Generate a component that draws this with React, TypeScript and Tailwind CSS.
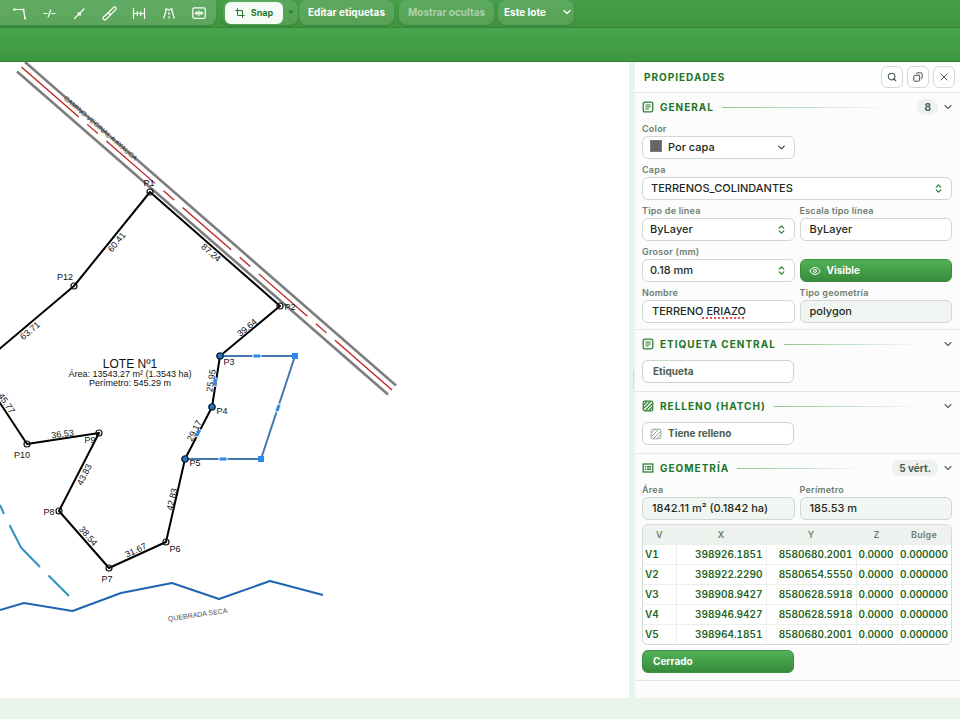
import React from "react";
import { ChevronDown, ChevronsUpDown, Copy, Crop, Eye, Search, X } from "lucide-react";

const toolIcons: { name: string; art: React.ReactNode }[] = [
  { name: "Polilínea", art: <><path d="M3 4.500h9.500l1.500 9" /><path d="M3 4.500h1M12.500 4.500l.100.500M13.900 13l.100.500" strokeWidth="2" /></> },
  { name: "Cortar línea", art: <path d="M3 8.500h3M11 8.500h3M7.200 12l2.600-7" /> },
  { name: "Punto medio", art: <><path d="M3.500 13.500L13 4" /><path d="M7.500 8.200l1.600 1.400" strokeWidth="2.200" /></> },
  { name: "Pincel", art: <><path d="M6.500 8.500l6-6a1.500 1.500 0 0 1 2.200 2.100L8.700 10.700" /><path d="M6.500 8.500a1.500 1.500 0 0 1 2.200 2.200l-3.200 3.200a1.900 1.900 0 0 1-3.600-.800l.600-1.100z" /></> },
  { name: "Cota", art: <path d="M2.500 3.500v10M13.500 3.500v10M3 8.500h10M6.300 6.500v4M9.700 6.500v4" /> },
  { name: "Camino", art: <path d="M5.500 4.200L2.800 13M10.500 4.200l2.700 8.800M4.500 4.200h2M9.500 4.200h2M8 4.200v1.300M8 7.500v2M8 11.500V13" /> },
  { name: "Ajustar", art: <><rect x="1.800" y="2.800" width="12.500" height="10.500" rx="1.500" /><path d="M4 8.200h2.500M9.500 8.200H12M5.500 6.800l1.300 1.400-1.300 1.400M10.500 6.800L9.200 8.200l1.300 1.400M8 5.800v4.800" /></> },
];

function NoteIcon() {
  return (
    <svg viewBox="0 0 12 12" className="size-3 shrink-0 fill-none stroke-[#2c7f32]" strokeWidth="1.300" strokeLinecap="round" strokeLinejoin="round">
      <path d="M3 1.200h6a1.800 1.800 0 0 1 1.800 1.800v6a1.800 1.800 0 0 1-1.800 1.800H1.800L1.200 9V3A1.800 1.800 0 0 1 3 1.200z" />
      <path d="M3.800 4h4.500M3.800 6h4.500M3.800 8h2.700" strokeWidth="1" />
    </svg>
  );
}

function HatchIcon({ muted = false }: { muted?: boolean }) {
  return (
    <svg viewBox="0 0 12 12" className={muted ? "size-3 shrink-0 fill-none stroke-[#7f9082]" : "size-3 shrink-0 fill-none stroke-[#2c7f32]"} strokeWidth={muted ? 0.8 : 1.2}>
      <rect x="1.200" y="1.200" width="9.600" height="9.600" rx="1.500" />
      <path d="M1.500 5l3.500-3.500M1.500 8.500l7-7M3.500 10.500l7-7M7 10.500L10.500 7" />
    </svg>
  );
}

function SheetIcon() {
  return (
    <svg viewBox="0 0 12 12" className="size-3 shrink-0 fill-none stroke-[#2c7f32]" strokeWidth="1.300">
      <rect x="1.200" y="2" width="9.600" height="8" />
      <path d="M2.800 4.500H4M4.800 4.500h4.400M2.800 6H4M4.800 6h4.400M2.800 7.500H4M4.800 7.500h4.400" strokeWidth="1" />
    </svg>
  );
}

function Section({ icon, title, badge, children }: { icon: React.ReactNode; title: string; badge?: string; children: React.ReactNode }) {
  return (
    <section className="border-b border-[#e3e8e4]">
      <button type="button" className="flex h-7 w-full items-center pr-1.5 pl-[7px] text-left">
        {icon}
        <h3 className="ml-1.5 text-[10px] font-bold tracking-widest text-[#217528]">{title}</h3>
        <span className="mx-2 h-px flex-1 bg-linear-to-r from-[#8fc493] to-transparent" />
        {badge && <span className="mr-1 ml-4 rounded-full bg-[#edf2ee] px-[7px] text-[10px] leading-4 font-bold text-[#4b5f50]">{badge}</span>}
        <ChevronDown className={badge ? "size-3 text-[#56665a]" : "ml-3 size-3 text-[#56665a]"} strokeWidth={2.2} />
      </button>
      <div className="pr-2 pl-[7px]">{children}</div>
    </section>
  );
}

const control = "block h-[23px] w-full rounded-md border border-[#cfd8d1] text-[11px] font-medium text-[#1c2a20] outline-none";
const textBox = `${control} px-[9px] pb-0.5`;

function Field({ id, label, wide = false, children }: { id: string; label: string; wide?: boolean; children: React.ReactNode }) {
  return (
    <div className={wide ? "col-span-2" : ""}>
      <label htmlFor={id} className="block h-[15px] text-[9px] leading-[15px] font-semibold tracking-wide text-[#6d7d71]">{label}</label>
      <div className="relative">{children}</div>
    </div>
  );
}

function SelectField({ id, label, value, wide = false }: { id: string; label: string; value: string; wide?: boolean }) {
  return (
    <Field id={id} label={label} wide={wide}>
      <select id={id} className={`${control} appearance-none bg-white ${wide ? "px-2" : "px-[7px]"}`}>
        <option>{value}</option>
      </select>
      <ChevronsUpDown className="pointer-events-none absolute top-1.5 right-2 size-[11px] text-[#2c8033]" strokeWidth={2.8} />
    </Field>
  );
}

const vertices = [
  ["V1", "398926.1851", "8580680.2001", "0.0000", "0.000000"],
  ["V2", "398922.2290", "8580654.5550", "0.0000", "0.000000"],
  ["V3", "398908.9427", "8580628.5918", "0.0000", "0.000000"],
  ["V4", "398946.9427", "8580628.5918", "0.0000", "0.000000"],
  ["V5", "398964.1851", "8580680.2001", "0.0000", "0.000000"],
];

const corners = [[150, 192], [280, 306], [220, 356], [212, 407], [185, 459], [166, 542], [109, 568], [59, 511], [99, 433], [27, 444], [74, 286]];

const lengths: [string, number, number, number][] = [
  ["60.41", 119, 244, -51],
  ["87.24", 209, 255, 41],
  ["39.64", 249, 330, -39],
  ["25.95", 214, 381, -81],
  ["29.17", 197, 432, -63],
  ["42.83", 175, 500, -77],
  ["31.67", 137, 553, -25],
  ["38.54", 86, 538, 49],
  ["43.83", 87, 476, -63],
  ["36.53", 63, 437, -8],
  ["45.77", 4, 405, 56],
  ["63.71", 32, 333, -40],
];

const cornerNames: [string, number, number][] = [
  ["P1", 149, 186], ["P2", 290, 310], ["P3", 229, 365], ["P4", 222, 414], ["P5", 195, 466], ["P6", 175, 552],
  ["P7", 107, 582], ["P8", 49, 515], ["P9", 90, 443], ["P10", 22, 458], ["P12", 65, 280],
];

const grips: [number, number, number][] = [[257, 356, 0], [278, 408, -71], [223, 459, 0], [198, 433, -63], [215, 382, -82]];

function Plan() {
  return (
    <svg className="absolute inset-0 size-full" role="img" aria-label="Plano del lote" fontFamily="'Liberation Sans', Arial, sans-serif" fontSize="9" textAnchor="middle" fill="#111">
      <g transform="translate(0 -62)">
        <g fill="none" stroke="#7d7d7d" strokeWidth="2.600">
          <path d="M25 62L396 385.500" />
          <path d="M17 71.500L388 394.500" />
          <path d="M21.500 67L392 390" stroke="#bd2020" strokeWidth="1.300" strokeDasharray="76 11.300 14 11.300 64.500 11.300 14 11.300 64.500 11.300 14 11.300 64.500 11.300 14 11.300 90 0" />
        </g>
        <text transform="translate(99 130) rotate(41)" fontSize="7" fill="#333">CAMINO VECINAL A AYAUCA</text>
        <g fill="none" strokeWidth="2" strokeLinejoin="round">
          <path d="M0 610L24 603L72.500 611L121 593L172 583L219 599L270 581L323 595" stroke="#1f65b2" />
          <path d="M0 505L4 514M9.500 525L21 547.500L40 567M48.500 575.500L69 596" stroke="#2f92c1" />
          <path d="M220 356H295L261 459H185" stroke="#4477ad" />
          <path d="M150 192L280 306L220 356L212 407L185 459L166 542L109 568L59 511L99 433L27 444L-23 368L74 286Z" stroke="#000" />
        </g>
        <text x="198" y="617" fontSize="7" fill="#555" transform="rotate(-8 198 617)">QUEBRADA SECA</text>
        <g fill="none" stroke="#111" strokeWidth="1.200">
          {corners.map(([x, y]) => <circle key={`${x}-${y}`} cx={x} cy={y} r="3" />)}
        </g>
        {[[220, 356], [212, 407], [185, 459]].map(([x, y]) => (
          <g key={x}>
            <rect x={x - 3} y={y - 3} width="6" height="6" fill="#2b75bd" />
            <circle cx={x} cy={y} r="3" fill="none" stroke="#0a2747" strokeWidth="1.200" />
          </g>
        ))}
        <rect x="292" y="353" width="6" height="6" fill="#298aeb" />
        <rect x="258" y="456" width="6" height="6" fill="#298aeb" />
        {grips.map(([x, y, angle]) => (
          <g key={`${x}-${y}`} transform={`translate(${x} ${y}) rotate(${angle})`}>
            <rect x="-4.500" y="-1.500" width="9" height="3" fill="#fff" />
            <rect x="-3.500" y="-1.500" width="7" height="3" fill="#298aeb" />
          </g>
        ))}
        {lengths.map(([label, x, y, angle]) => (
          <text key={label} transform={`translate(${x} ${y}) rotate(${angle})`}>{label}</text>
        ))}
        {cornerNames.map(([label, x, y]) => <text key={label} x={x} y={y}>{label}</text>)}
        <text x="130" y="368" fontSize="12">LOTE Nº1</text>
        <text x="130" y="377">Área: 13543.27 m² (1.3543 ha)</text>
        <text x="130" y="386">Perímetro: 545.29 m</text>
      </g>
    </svg>
  );
}

const greenButton = "h-[23px] rounded-md border border-[#3b8f40] bg-linear-to-b from-[#52b257] to-[#378b3c] text-left text-[10px] font-bold text-white";
const panelButton = "flex size-[22px] items-center justify-center rounded-md border border-[#d3dad5] bg-white text-[#46564a]";
const outlineButton = "flex h-[23px] w-[152px] items-center rounded-md border border-[#cbd4cd] bg-white text-[10px] font-bold text-[#4a5f52]";
const barButton = "block h-[25px] rounded-lg bg-white/12 text-[10px] font-bold shadow-sm";

export default function App() {
  return (
    <div className="flex min-h-screen flex-col bg-[#e8f3e9] font-['Inter',sans-serif]">
      <header className="text-white">
        <div className="flex h-7 items-start border-b border-[#36843a] bg-linear-to-b from-[#469f4a] to-[#40943f]">
          <div className="flex h-[25px] rounded-br-lg bg-white/15 pr-0.5 pl-1 shadow-sm">
            {toolIcons.map(({ name, art }) => (
              <button key={name} type="button" aria-label={name} className="flex w-[30px] items-center justify-center">
                <svg viewBox="0 0 16 16" className="size-4 fill-none stroke-current" strokeWidth="1.200" strokeLinecap="round" strokeLinejoin="round">{art}</svg>
              </button>
            ))}
          </div>
          <div className="ml-[7px] flex h-[25px] items-center rounded-lg bg-white/10 pl-0.5 shadow-sm">
            <button type="button" className="flex h-[22px] w-[58px] items-center justify-center gap-1.5 rounded-md bg-[#f5fcf5] text-[9px] font-bold text-[#27772d]">
              <Crop className="size-[10px]" strokeWidth={2.6} />
              Snap
            </button>
            <button type="button" aria-label="Opciones de snap" className="flex w-[15px] justify-center">
              <svg viewBox="0 0 8 5" className="h-[5px] w-2 fill-[#2f8035]"><path d="M1 .5h6L4 4z" /></svg>
            </button>
          </div>
          <button type="button" className={`${barButton} ml-px w-[95px]`}>Editar etiquetas</button>
          <button type="button" className={`${barButton} ml-[5px] w-[95px] text-white/50`}>Mostrar ocultas</button>
          <div className="relative ml-1">
            <select aria-label="Ámbito" className={`${barButton} w-[76px] appearance-none pl-1.5 outline-none`}>
              <option>Este lote</option>
            </select>
            <ChevronDown className="pointer-events-none absolute top-1.5 right-px size-3" strokeWidth={2.6} />
          </div>
        </div>
        <div className="h-[34px] border-b border-[#2e7d32] bg-linear-to-b from-[#48a54c] to-[#3d9741]" />
      </header>

      <div className="flex flex-1">
        <main className="relative flex-1 overflow-hidden bg-white">
          <Plan />
        </main>
        <div className="flex w-[6px] items-center bg-[#e8f3e9]">
          <span className="ml-1 h-4 border-l border-dotted border-[#b9cfbb]" />
        </div>
        <aside className="w-[325px] bg-[#fbfcfb]">
          <div className="flex h-[31px] items-center gap-1 border-b border-[#e3e8e4] bg-[#fdfefd] pr-[5px] pl-[9px]">
            <h2 className="flex-1 text-[10px] font-bold tracking-widest text-[#217528]">PROPIEDADES</h2>
            <button type="button" aria-label="Buscar" className={panelButton}><Search className="size-[10px]" strokeWidth={2.6} /></button>
            <button type="button" aria-label="Separar panel" className={panelButton}><Copy className="size-[10px] -scale-x-100" strokeWidth={2.4} /></button>
            <button type="button" aria-label="Cerrar" className={panelButton}><X className="size-3" strokeWidth={2} /></button>
          </div>

          <Section icon={<NoteIcon />} title="GENERAL" badge="8">
            <div className="grid grid-cols-2 gap-x-[5px] gap-y-[3px] pb-1.5">
              <Field id="color" label="Color">
                <select id="color" className={`${control} appearance-none bg-white pl-[25px]`}>
                  <option>Por capa</option>
                </select>
                <span className="pointer-events-none absolute top-1 left-2 size-3 border border-[#7c7c7c] bg-[#666]" />
                <ChevronDown className="pointer-events-none absolute top-1.5 right-2 size-[11px] text-[#33483a]" strokeWidth={2.8} />
              </Field>
              <SelectField id="capa" label="Capa" value="TERRENOS_COLINDANTES" wide />
              <SelectField id="tipo" label="Tipo de línea" value="ByLayer" />
              <Field id="escala" label="Escala tipo línea">
                <input id="escala" defaultValue="ByLayer" className={`${textBox} bg-white`} />
              </Field>
              <SelectField id="grosor" label="Grosor (mm)" value="0.18 mm" />
              <button type="button" className={`${greenButton} flex items-center gap-1.5 self-end pl-2`}>
                <Eye className="size-3" strokeWidth={2} />
                Visible
              </button>
              <Field id="nombre" label="Nombre">
                <input id="nombre" defaultValue="TERRENO ERIAZO" spellCheck={false} className={`${textBox} bg-white`} />
                <span className="pointer-events-none absolute bottom-1 left-[60px] w-[42px] border-b-2 border-dotted border-[#e2545c]" />
              </Field>
              <Field id="geometria" label="Tipo geometría">
                <input id="geometria" readOnly defaultValue="polygon" className={`${textBox} bg-[#f1f6f2]`} />
              </Field>
            </div>
          </Section>

          <Section icon={<NoteIcon />} title="ETIQUETA CENTRAL">
            <div className="pt-0.5 pb-2">
              <button type="button" className={`${outlineButton} pl-[10px]`}>Etiqueta</button>
            </div>
          </Section>

          <Section icon={<HatchIcon />} title="RELLENO (HATCH)">
            <div className="pt-0.5 pb-2">
              <button type="button" className={`${outlineButton} gap-1.5 pl-[7px]`}><HatchIcon muted />Tiene relleno</button>
            </div>
          </Section>

          <Section icon={<SheetIcon />} title="GEOMETRÍA" badge="5 vért.">
            <div className="pb-[7px]">
              <div className="grid grid-cols-2 gap-x-[5px]">
                <Field id="area" label="Área">
                  <input id="area" readOnly defaultValue="1842.11 m² (0.1842 ha)" className={`${textBox} bg-[#f1f6f2]`} />
                </Field>
                <Field id="perimetro" label="Perímetro">
                  <input id="perimetro" readOnly defaultValue="185.53 m" className={`${textBox} bg-[#f1f6f2]`} />
                </Field>
              </div>
              <div className="mt-1 overflow-hidden rounded-md border border-[#d3dbd5] bg-white">
                <table className="w-full table-fixed text-[10px] font-semibold text-[#1f6425] tabular-nums">
                  <colgroup>
                    <col className="w-[33px]" /><col className="w-[90px]" /><col className="w-[90px]" /><col className="w-[41px]" /><col />
                  </colgroup>
                  <thead>
                    <tr className="h-[19px] bg-[#edf2ee] text-[9px] tracking-wide text-[#6d7d71]">
                      {["V", "X", "Y", "Z", "Bulge"].map((h) => <th key={h} className="p-0 font-semibold">{h}</th>)}
                    </tr>
                  </thead>
                  <tbody>
                    {vertices.map((row) => (
                      <tr key={row[0]} className="h-5 border-t border-[#eaf0eb]">
                        {row.map((cell, i) => (
                          <td key={i} className={i === 0 ? "border-r border-[#eaf0eb] p-0 pl-0.5 text-left" : "border-r border-[#eaf0eb] p-0 pr-[3px] text-right last:border-r-0"}>{cell}</td>
                        ))}
                      </tr>
                    ))}
                  </tbody>
                </table>
              </div>
              <button type="button" className={`${greenButton} mt-[5px] block w-[152px] pl-[10px]`}>Cerrado</button>
            </div>
          </Section>
        </aside>
      </div>
      <footer className="h-[21px] bg-[#e8f3e9]" />
    </div>
  );
}
